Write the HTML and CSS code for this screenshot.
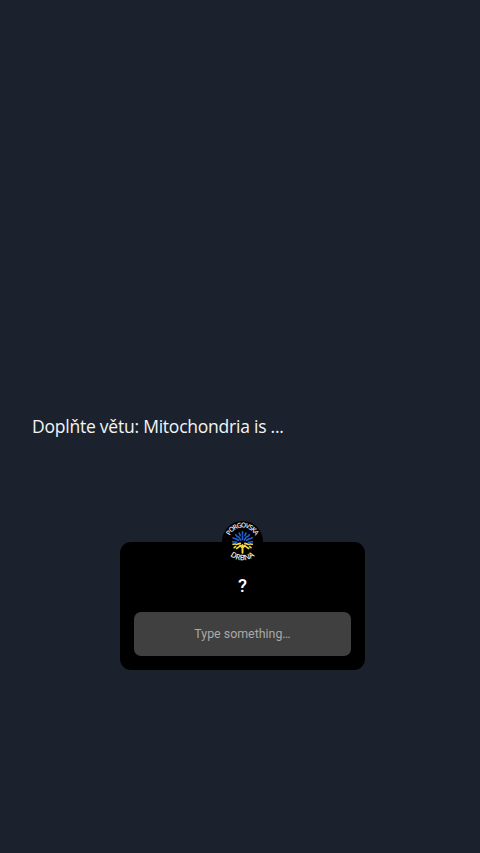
FILE: index.html
```html
<!DOCTYPE html>
<html lang="cs">
<head>
<meta charset="utf-8">
<title>Otázka</title>
<link rel="stylesheet" href="styles.css">
</head>
<body>
<main class="story">
  <p class="caption">Doplňte větu: Mitochondria is ...</p>
  <section class="card">
    <svg class="avatar" viewBox="0 0 40 40" aria-hidden="true">
      <defs>
        <path id="top-arc" d="M7 22.7A13.4 13.2 0 1 1 33 22.7"/>
        <path id="bottom-arc" d="M3.7 29A18.8 18.8 0 0 0 36.3 29"/>
      </defs>
      <circle cx="20" cy="20" r="20"/>
      <text class="mark"><textPath href="#top-arc" startOffset="50%" text-anchor="middle" textLength="31">PORGOVSKA</textPath></text>
      <text class="mark mark-bottom"><textPath href="#bottom-arc" startOffset="50%" text-anchor="middle" textLength="26">DRBNA</textPath></text>
      <g class="leaf-blue">
        <path d="M20 18V14.5M17.8 14.2L16.8 11.8M20 13V10.5M22.3 14.2L23.3 11.8M18.2 18.5L16.2 15.5M21.8 18.5L23.8 15.5M15 15.2L13.3 13.4M25 15.2L26.8 13.4M16 18.8L13.4 17.4M24 18.8L26.8 17.4M12.4 17.2L10.8 16.4M27.8 17.2L29.4 16.4M14.3 20.7L10.4 20.2M25.8 20.7L29.8 20.2"/>
      </g>
      <g class="leaf-yellow">
        <path d="M17.8 21.8L14 23M22.3 21.8L26.2 23M13 22.4L10.8 22.7M27.3 22.4L29.5 22.7M17.5 24.5L14.3 26.8M22.7 24.5L26 26.8M13.2 25L11.9 26M27 25L28.3 26"/>
        <path class="trunk" d="M20 23.5V31M20 26L17.7 24M20 26L22.4 24"/>
      </g>
    </svg>
    <h1 class="question">?</h1>
    <div class="answer">Type something…</div>
  </section>
</main>
</body>
</html>
```
FILE: styles.css
```css
body {
  margin: 0;
  background: #1b222d;
}

.story {
  box-sizing: border-box;
  height: 853px;
  padding: 414px 0 0 32px;
  overflow: hidden;
}

.caption {
  margin: 0;
  color: #f4f5f6;
  font: 17.5px/24px "Open Sans", sans-serif;
  letter-spacing: -0.23px;
}

.card {
  position: relative;
  box-sizing: border-box;
  width: 245px;
  height: 128px;
  margin: 104px 0 0 88px;
  padding: 32px 14px 14px;
  border-radius: 11px;
  background: #000;
  text-align: center;
}

.avatar {
  position: absolute;
  top: -21px;
  left: 102px;
  width: 41px;
  height: 41px;
}

.mark {
  fill: #f3f3ef;
  font: 500 6.6px "Noto Sans", sans-serif;
}

.mark-bottom {
  font-size: 7.6px;
}

.leaf-blue,
.leaf-yellow {
  fill: none;
  stroke-linecap: round;
  stroke-width: 1.6;
}

.leaf-blue {
  stroke: #2160d0;
}

.leaf-yellow {
  stroke: #f0d943;
}

.trunk {
  stroke-width: 1.9;
}

.question {
  margin: 0;
  color: #fff;
  font: 500 18.5px/24px Roboto, sans-serif;
}

.answer {
  height: 44px;
  margin-top: 14px;
  border-radius: 7px;
  background: #404040;
  color: #a9a9a9;
  font: 12.4px/44px Roboto, sans-serif;
}
```
